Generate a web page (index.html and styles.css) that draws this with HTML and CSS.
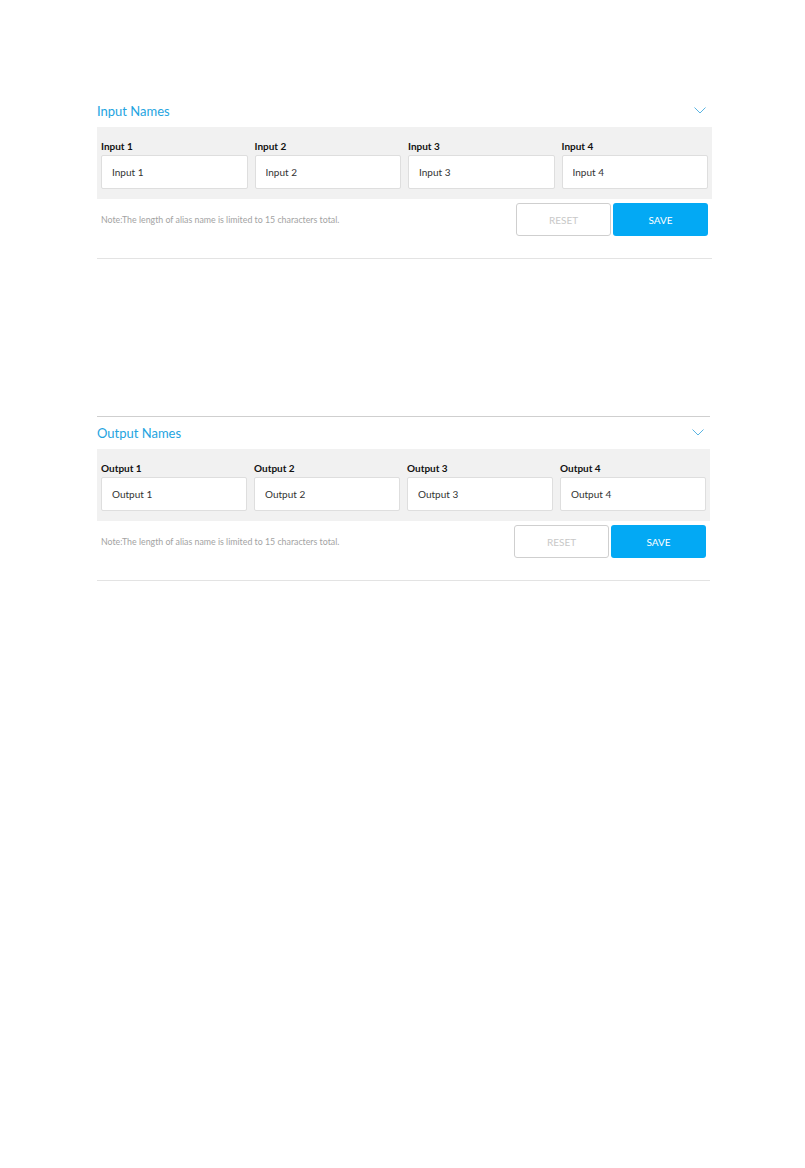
FILE: index.html
```html
<!DOCTYPE html>
<html lang="en">
<head>
  <meta charset="UTF-8">
  <meta name="viewport" content="width=device-width, initial-scale=1.0">
  <title>Alias Names</title>
  <link rel="stylesheet" href="styles.css">
</head>
<body>
  <div class="page">
    <!-- Input names -->
    <section class="panel panel-first">
      <div class="panel-head">
        <span class="panel-title">Input Names</span>
        <svg class="chevron" width="12" height="7" viewBox="0 0 12 7"><path d="M0.5 0.5 L6 6 L11.5 0.5" fill="none" stroke="#5ab4e2" stroke-width="1"/></svg>
      </div>
      <div class="fields">
        <div class="field"><label>Input 1</label><input type="text" value="Input 1"></div>
        <div class="field"><label>Input 2</label><input type="text" value="Input 2"></div>
        <div class="field"><label>Input 3</label><input type="text" value="Input 3"></div>
        <div class="field"><label>Input 4</label><input type="text" value="Input 4"></div>
      </div>
      <div class="actions">
        <span class="note">Note:The length of alias name is limited to 15 characters total.</span>
        <button class="btn btn-reset">RESET</button>
        <button class="btn btn-save">SAVE</button>
      </div>
    </section>

    <!-- Output names -->
    <section class="panel panel-second">
      <div class="panel-head">
        <span class="panel-title">Output Names</span>
        <svg class="chevron" width="12" height="7" viewBox="0 0 12 7"><path d="M0.5 0.5 L6 6 L11.5 0.5" fill="none" stroke="#5ab4e2" stroke-width="1"/></svg>
      </div>
      <div class="fields">
        <div class="field"><label>Output 1</label><input type="text" value="Output 1"></div>
        <div class="field"><label>Output 2</label><input type="text" value="Output 2"></div>
        <div class="field"><label>Output 3</label><input type="text" value="Output 3"></div>
        <div class="field"><label>Output 4</label><input type="text" value="Output 4"></div>
      </div>
      <div class="actions">
        <span class="note">Note:The length of alias name is limited to 15 characters total.</span>
        <button class="btn btn-reset">RESET</button>
        <button class="btn btn-save">SAVE</button>
      </div>
    </section>
  </div>
</body>
</html>
```

FILE: styles.css
```css
body {
  margin: 0;
  background-color: #fff;
  font-family: Lato, "Open Sans", sans-serif;
  color: #222;
}
.page {
  padding: 95px 0 0 97px;
}
.panel {
  width: 615px;
  border-bottom: 1px solid #e3e3e3;
}
.panel-second {
  width: 613px;
  margin-top: 157px;
  border-top: 1px solid #cfcfcf;
}
.panel-head {
  height: 32px;
  display: flex;
  align-items: center;
  justify-content: space-between;
  padding-right: 6px;
}
.panel-title {
  font-size: 13px;
  color: #24a4df;
}
.chevron {
  margin-top: -2px;
}
.fields {
  background-color: #f1f1f1;
  display: grid;
  grid-template-columns: repeat(4, 1fr);
  gap: 7px;
  padding: 9px 4px 10px 4px;
}
.field label {
  display: block;
  font-size: 10px;
  font-weight: bold;
  color: #111;
  height: 19px;
  line-height: 21px;
}
.field input {
  box-sizing: border-box;
  width: 100%;
  height: 34px;
  border: 1px solid #dedede;
  border-radius: 2px;
  background-color: #fff;
  padding: 0 10px;
  font-family: Lato, "Open Sans", sans-serif;
  font-size: 10px;
  color: #333;
  outline: none;
}
.actions {
  display: flex;
  align-items: center;
  padding: 4px 4px 22px 4px;
  gap: 2px;
}
.note {
  flex: 1;
  font-size: 8.8px;
  color: #a3a3a3;
}
.btn {
  box-sizing: border-box;
  width: 95px;
  height: 33px;
  border-radius: 3px;
  font-family: Lato, "Open Sans", sans-serif;
  font-size: 10px;
  cursor: pointer;
}
.btn-reset {
  background-color: #fff;
  border: 1px solid #cfcfcf;
  color: #c8c8c8;
}
.btn-save {
  background-color: #03a9f4;
  border: none;
  color: #fff;
}
```
